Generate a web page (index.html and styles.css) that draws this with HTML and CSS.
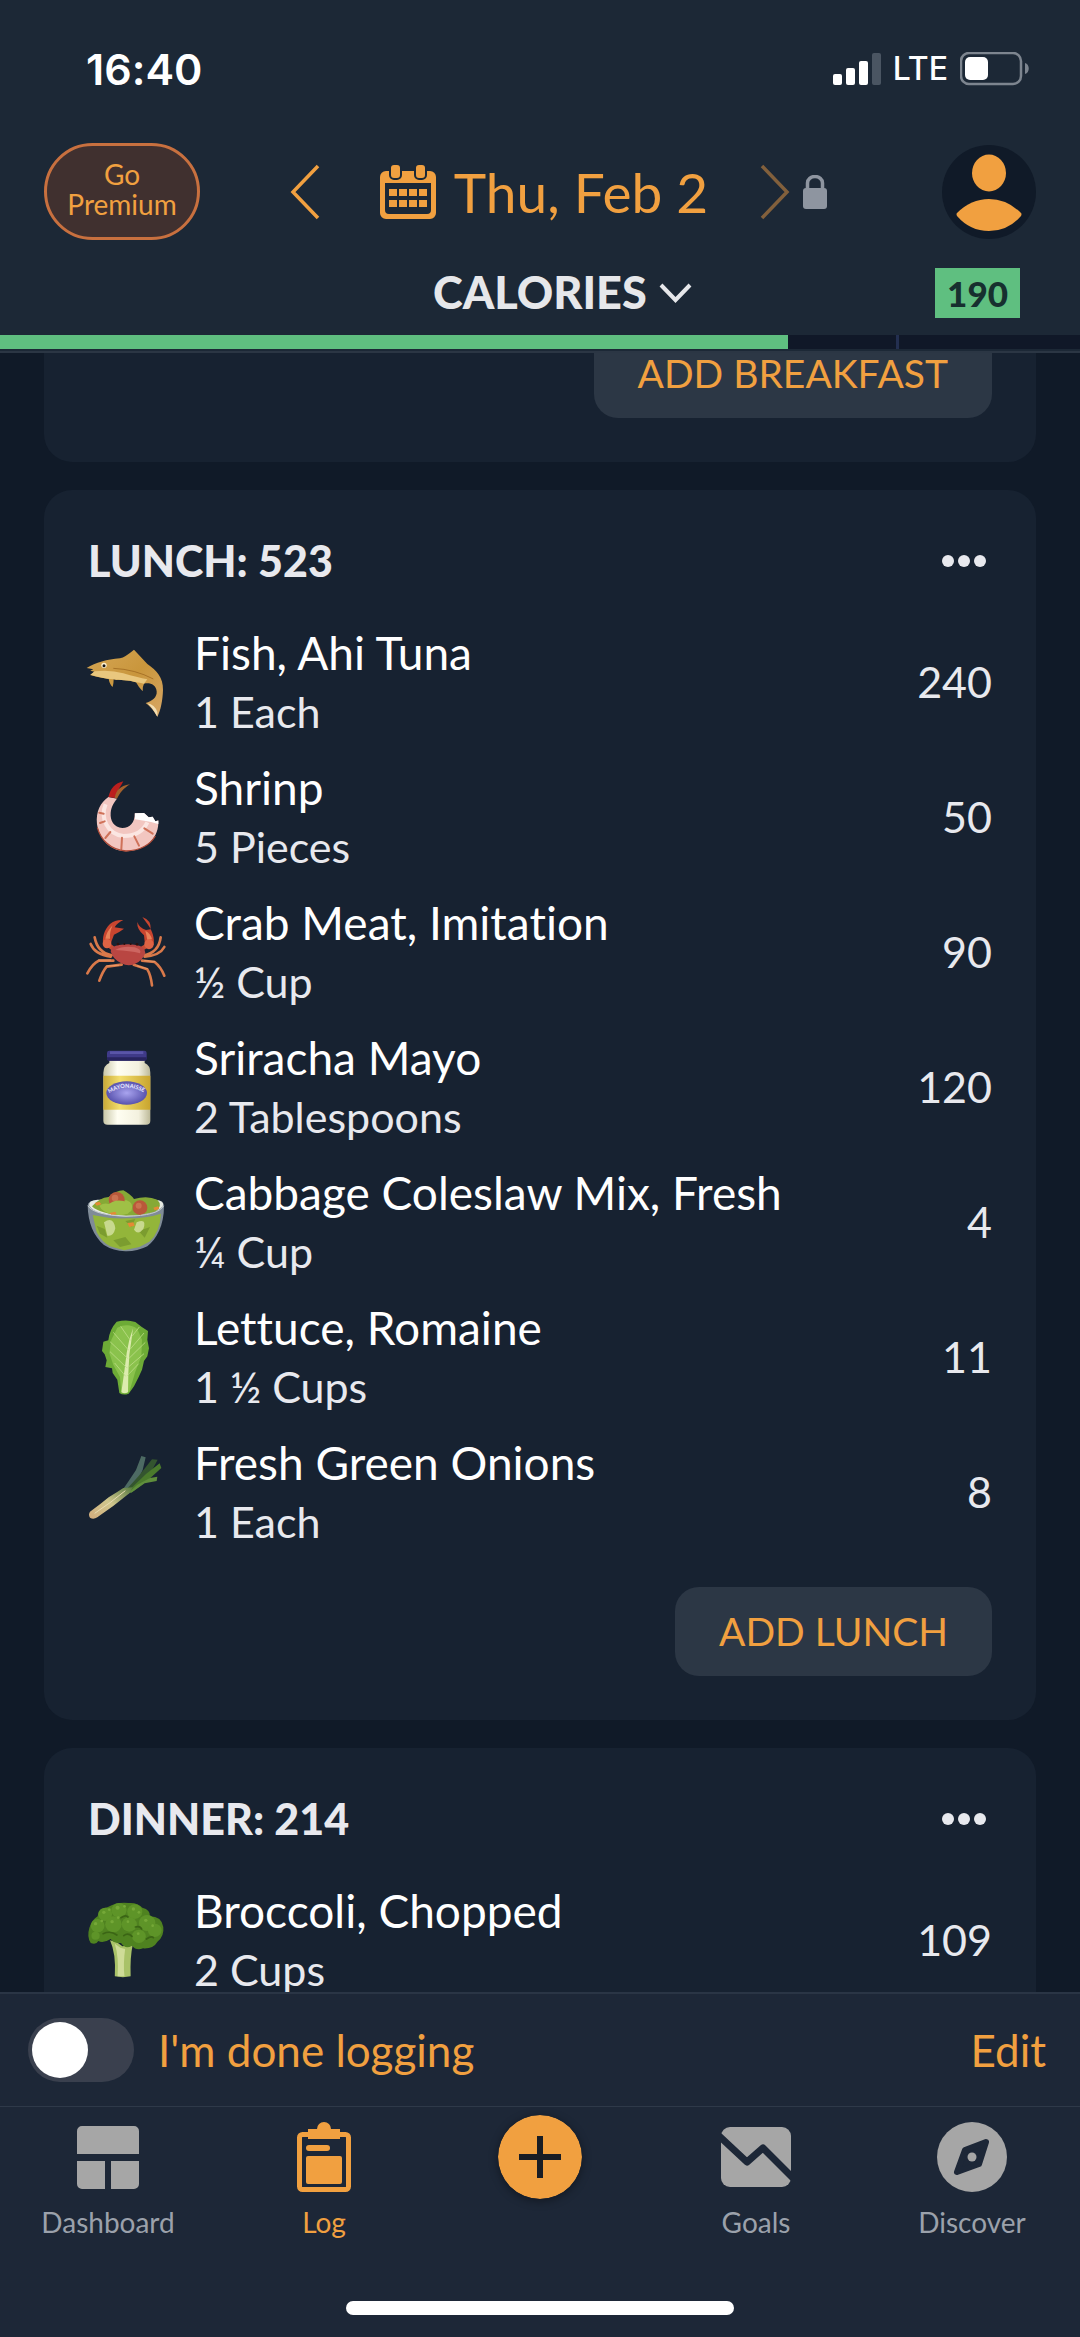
FILE: index.html
```
<!DOCTYPE html>
<html lang="en">
<head>
    <meta charset="utf-8">
    <meta name="viewport" content="width=device-width, initial-scale=1">
    <title>Food Log</title>
    <link rel="stylesheet" href="styles.css">
</head>
<body>
    <header class="header">
        <div class="status-bar">
            <span class="time">16:40</span>
            <div class="status-icons">
                <svg width="48" height="33" viewBox="0 0 48 33">
                    <g fill="#fff">
                        <rect x="0" y="21" width="9" height="11" rx="2"/>
                        <rect x="13" y="15" width="9" height="17" rx="2"/>
                        <rect x="26" y="8" width="9" height="24" rx="2"/>
                    </g>
                    <rect x="39" y="0" width="9" height="32" rx="2" fill="#4a5562"/>
                </svg>
                <span class="network">LTE</span>
                <svg width="70" height="34" viewBox="0 0 70 34">
                    <rect x="1" y="1" width="60" height="31" rx="8" fill="none" stroke="#7d858f" stroke-width="2.5"/>
                    <rect x="5" y="5" width="23" height="23" rx="5" fill="#fff"/>
                    <path d="M65 11c5 1 5 10 0 11z" fill="#7d858f"/>
                </svg>
            </div>
        </div>

        <div class="top-row">
            <button class="premium">Go<br>Premium</button>
            <div class="date-nav">
                <button class="icon-button" aria-label="Previous day">
                    <svg width="30" height="56" viewBox="0 0 30 56"><path d="M28 2L3 28l25 26" fill="none" stroke="#f1a040" stroke-width="3.5"/></svg>
                </button>
                <button class="date">
                    <svg width="56" height="54" viewBox="0 0 56 54">
                        <path fill="#f1a040" fill-rule="evenodd" d="M6 6h44a6 6 0 0 1 6 6v36a6 6 0 0 1-6 6H6a6 6 0 0 1-6-6V12a6 6 0 0 1 6-6zM5 18v27a4 4 0 0 0 4 4h38a4 4 0 0 0 4-4V18z"/>
                        <g fill="#f1a040" stroke="#1c2836" stroke-width="2">
                            <rect x="10" y="-1" width="11" height="15" rx="4"/>
                            <rect x="35" y="-1" width="11" height="15" rx="4"/>
                        </g>
                        <path fill="#f1a040" d="M9 24h8v7H9zM19 24h8v7h-8zM29 24h8v7h-8zM39 24h8v7h-8zM9 35h8v7H9zM19 35h8v7h-8zM29 35h8v7h-8zM39 35h8v7h-8z"/>
                    </svg>
                    Thu, Feb 2
                </button>
                <button class="icon-button" aria-label="Next day">
                    <svg width="30" height="56" viewBox="0 0 30 56"><path d="M2 2l25 26L2 54" fill="none" stroke="#82603c" stroke-width="3.5"/></svg>
                </button>
            </div>
            <div class="top-right">
                <svg class="lock" width="24" height="34" viewBox="0 0 24 34">
                    <path d="M4.500 15V8a7.500 6.500 0 0 1 15 0v7" fill="none" stroke="#8e95a0" stroke-width="3.500"/>
                    <rect y="13" width="24" height="21" rx="3" fill="#8e95a0"/>
                </svg>
                <button class="icon-button" aria-label="Profile">
                    <svg width="94" height="94" viewBox="0 0 94 94">
                        <circle cx="47" cy="47" r="47" fill="#101a28"/>
                        <ellipse cx="47" cy="28" rx="17" ry="18.500" fill="#f1a040"/>
                        <path d="M15 68q14-14 32-14t32 14q1 1 0 3Q66 86 47 86T15 71q-1-2 0-3z" fill="#f1a040"/>
                    </svg>
                </button>
            </div>
        </div>

        <div class="nutrient-row">
            <select class="nutrient" aria-label="Nutrient">
                <option>CALORIES</option>
            </select>
            <div class="nutrient-right">
                <svg width="33" height="22" viewBox="0 0 33 22"><path d="M2 3l14.500 15L31 3" fill="none" stroke="#e6e7ea" stroke-width="4"/></svg>
                <span class="badge">190</span>
            </div>
        </div>

        <div class="progress">
            <div class="progress-fill" style="width: 73%"></div>
            <div class="progress-mark"></div>
        </div>
    </header>

    <main class="log">
        <div class="meals">
            <section class="card">
                <button class="add">ADD BREAKFAST</button>
            </section>

            <section class="card">
                <div class="card-head">
                    <h2>LUNCH: 523</h2>
                    <button class="icon-button more" aria-label="Lunch options">
                        <svg width="44" height="12" viewBox="0 0 44 12" fill="#e8e9ee"><circle cx="6" cy="6" r="6"/><circle cx="22" cy="6" r="6"/><circle cx="38" cy="6" r="6"/></svg>
                    </button>
                </div>
                <ul class="foods">
                    <li class="food">
                        <svg class="food-icon" viewBox="84 80 228 228">
                            <defs>
                                <linearGradient id="fish" x1="0" y1="0" x2="1" y2="1">
                                    <stop offset="0" stop-color="#d5a655"/><stop offset=".5" stop-color="#c9963c"/><stop offset="1" stop-color="#d8a766"/>
                                </linearGradient>
                            </defs>
                            <path fill="url(#fish)" d="M80 152C108 136 140 126 180 123Q196 119 222 97Q240 116 262 140C290 160 310 180 309 218C308 250 302 280 292 298Q276 270 257 257C276 252 292 240 290 222C288 202 270 195 252 199Q247 208 248 222Q236 210 228 195C204 187 180 190 161 186Q161 198 158 209Q148 200 146 184Q110 180 90 173L103 163L91 160L100 156z"/>
                            <path fill="#e9c77e" d="M104 162Q150 156 190 168Q232 180 262 186L252 199Q238 196 228 195C204 187 180 190 161 186Q120 182 92 172z"/>
                            <path fill="#f3dfb4" d="M262 258Q284 262 292 284L292 298Q276 270 262 258z"/>
                            <path fill="none" stroke="#a87327" stroke-width="3" d="M160 153Q225 156 280 185"/>
                            <circle cx="132" cy="144" r="8" fill="#fff3d4"/><circle cx="132" cy="145" r="4.500" fill="#141414"/>
                        </svg>
                        <div class="food-text"><span class="food-name">Fish, Ahi Tuna</span><span class="food-amount">1 Each</span></div>
                        <span class="food-calories">240</span>
                    </li>
                    <li class="food">
                        <svg class="food-icon" viewBox="84 484 228 228">
                            <path fill="#f2c6c0" d="M145 538C122 555 107 580 111 620C118 665 150 700 198 701C260 699 298 660 295 608L286 611L278 597L266 599L252 586L224 587C225 615 210 631 187 631C162 628 150 610 152 585C154 565 163 553 171 543z"/>
                            <path fill="none" stroke="#fbe6e2" stroke-width="12" d="M137 560C120 600 142 650 190 655C225 655 250 640 262 614"/>
                            <path fill="#fff" d="M225 587l27-1 14 13 12-2 8 14 9-2v10l-22-6-20-4-28-4z"/>
                            <g stroke="#cf7259" stroke-width="6" stroke-linecap="round">
                                <path d="M118 585l13 3M120 616l14-5M136 661l15-18M184 694l2-34M237 684l-14-28M278 648l-25-16"/>
                            </g>
                            <path fill="none" stroke="#b04c38" stroke-width="4" d="M112 630C122 665 150 697 198 700C240 698 270 682 286 655"/>
                            <path fill="#bb1f1d" d="M145 538C153 510 164 498 190 491L184 502C174 515 170 530 164 541z"/>
                            <path fill="#a4622c" d="M164 540C168 520 178 505 210 500C190 512 180 526 171 543z"/>
                        </svg>
                        <div class="food-text"><span class="food-name">Shrinp</span><span class="food-amount">5 Pieces</span></div>
                        <span class="food-calories">50</span>
                    </li>
                    <li class="food">
                        <svg class="food-icon" viewBox="84 888 228 228">
                            <g fill="none" stroke="#d9794a" stroke-width="8" stroke-linecap="round" stroke-linejoin="round">
                                <path d="M155 1012Q112 1004 104 958M152 1016Q105 1010 92 978M160 1028L116 1028Q98 1036 82 1066M185 1040L140 1046Q128 1060 118 1088"/>
                                <path d="M251 1012Q296 1004 302 958M254 1016Q300 1012 313 987M246 1028L284 1032Q302 1046 313 1073M221 1040L262 1054Q272 1070 276 1102"/>
                            </g>
                            <g fill="none" stroke="#f3ab74" stroke-width="2" stroke-linecap="round">
                                <path d="M116 1026L152 1026M140 1044L176 1042M284 1030L254 1028M262 1052L232 1044"/>
                            </g>
                            <path fill="none" stroke="#c84c34" stroke-width="13" stroke-linecap="round" d="M160 992L142 978M246 992L266 980"/>
                            <path fill="#c9452f" d="M130 980C126 960 132 935 150 918Q166 904 190 906Q172 914 164 928L192 932Q176 944 162 950Q154 968 150 988z"/>
                            <path fill="#c9452f" d="M281 980C284 960 278 940 264 920L247 897Q274 906 272 934L258 936Q238 930 232 912Q230 934 252 952L256 990z"/>
                            <path fill="#e98259" d="M136 962Q140 940 158 922Q148 944 150 962zM276 964Q272 946 256 938Q260 954 262 966z"/>
                            <ellipse cx="141" cy="977" rx="13" ry="14" fill="#dd6344"/><ellipse cx="267" cy="979" rx="14" ry="15" fill="#dd6344"/>
                            <path fill="#b94642" d="M152 1000Q154 984 178 981Q204 976 229 981Q254 986 256 1004Q250 1026 224 1038Q204 1046 184 1036Q158 1024 152 1000z"/>
                            <path fill="#cd6661" d="M166 996Q190 982 224 988Q246 994 240 1006Q210 998 166 996z"/>
                            <circle cx="174" cy="978" r="4" fill="#2b1210"/><circle cx="193" cy="978" r="3" fill="#2b1210"/><circle cx="212" cy="978" r="3" fill="#2b1210"/><circle cx="231" cy="979" r="4" fill="#2b1210"/>
                        </svg>
                        <div class="food-text"><span class="food-name">Crab Meat, Imitation</span><span class="food-amount">½ Cup</span></div>
                        <span class="food-calories">90</span>
                    </li>
                    <li class="food">
                        <svg class="food-icon" viewBox="84 91 228 228">
                            <defs>
                                <linearGradient id="jar"><stop offset="0" stop-color="#c9c7a8"/><stop offset=".3" stop-color="#fffef2"/><stop offset=".75" stop-color="#f3f1df"/><stop offset="1" stop-color="#bcb998"/></linearGradient>
                                <linearGradient id="band"><stop offset="0" stop-color="#c9aa38"/><stop offset=".35" stop-color="#f3de6d"/><stop offset="1" stop-color="#c9a52e"/></linearGradient>
                                <radialGradient id="oval"><stop offset="0" stop-color="#a9a4ef"/><stop offset="1" stop-color="#5953ae"/></radialGradient>
                                <path id="arc" d="M148 224Q200 190 256 224"/>
                            </defs>
                            <path fill="url(#jar)" d="M148 120H254V133Q271 140 271 162V306Q271 318 258 318H143Q130 318 130 306V162Q131 140 148 133z"/>
                            <path fill="url(#band)" d="M130 171H271V273H130z"/>
                            <ellipse cx="200" cy="223" rx="61" ry="35" fill="url(#oval)"/>
                            <text class="jar-label"><textPath href="#arc">MAYONAISSE</textPath></text>
                            <rect x="141" y="96" width="119" height="30" rx="7" fill="#3f3a88"/>
                            <path fill="#5a55a8" d="M150 98H250V106H150z"/>
                            <path fill="#28245e" d="M141 116H260V120Q260 126 253 126H148Q141 126 141 120z"/>
                        </svg>
                        <div class="food-text"><span class="food-name">Sriracha Mayo</span><span class="food-amount">2 Tablespoons</span></div>
                        <span class="food-calories">120</span>
                    </li>
                    <li class="food">
                        <svg class="food-icon" viewBox="84 495 228 228">
                            <path fill="#7f8b97" d="M83 560Q84 545 110 544H285Q312 545 312 562C312 620 290 660 262 682Q230 698 196 697Q160 696 132 678C100 650 84 610 83 560z"/>
                            <path fill="#e7ebe4" d="M88 560Q84 544 112 542H285Q316 544 308 562Q290 586 198 592Q104 588 88 560z"/>
                            <path fill="#86a936" d="M96 562Q118 536 146 534Q168 514 190 514Q212 526 222 540Q262 528 292 542Q310 560 286 578Q240 590 198 590Q120 586 96 562z"/>
                            <path fill="#93b53a" d="M98 588Q150 600 200 598Q260 598 303 584Q300 640 268 668L238 684L192 694L150 682Q126 670 110 640z"/>
                            <path fill="#9fc046" d="M118 560Q140 546 158 562Q172 540 200 544Q224 552 214 576Q190 592 160 586Q126 580 118 560z"/>
                            <path fill="#7b9c2f" d="M110 620l24 10 8 26-22-12zM196 606l30-6-12 24zM236 636l34-12-16 32zM160 664l36-10 18 22-34 8z"/>
                            <path fill="#d6e2a4" d="M132 610Q160 590 166 628Q160 654 142 650zM230 610Q262 596 250 630Q234 650 222 632z" opacity=".8"/>
                            <circle cx="170" cy="543" r="24" fill="#b9583a"/><circle cx="240" cy="566" r="22" fill="#b9583a"/>
                            <circle cx="165" cy="537" r="10" fill="#cb7250"/><circle cx="236" cy="560" r="9" fill="#cb7250"/>
                            <path fill="#9fc046" d="M140 560Q170 534 204 552Q216 566 204 584Q170 592 146 580z"/>
                            <path fill="#e48a35" d="M104 552l14-4 6 8-14 4zM148 582l18-4 4 8-16 2zM280 566l14-4 4 8-14 4zM202 612l18-2 4 10-16 4z"/>
                            <path fill="none" stroke="#c7cdd0" stroke-width="3" d="M84 560Q100 588 198 592Q296 590 311 560"/>
                        </svg>
                        <div class="food-text"><span class="food-name">Cabbage Coleslaw Mix, Fresh</span><span class="food-amount">¼ Cup</span></div>
                        <span class="food-calories">4</span>
                    </li>
                    <li class="food">
                        <svg class="food-icon" viewBox="84 88 228 228">
                            <path fill="#6dab36" d="M178 310L172 270L158 250L156 236L136 232L140 212L134 194L126 184L130 156L145 152Q148 120 170 96Q200 88 226 97Q244 112 264 124L262 150L267 176L262 200L252 214L246 240L236 262L222 290L206 312Q190 318 178 310z"/>
                            <path fill="#8ac24c" d="M184 306L180 262L160 226L148 190L154 150L172 114Q206 98 232 118L246 150L244 200L226 246L208 306z"/>
                            <path fill="#dcebae" d="M184 308Q194 240 200 190Q206 150 219 116Q214 156 208 196Q204 250 204 308Q194 314 184 308z"/>
                            <g fill="none" stroke="#bcdc86" stroke-width="2.500">
                                <path d="M197 260L164 220M200 234L150 186M203 206L150 156M206 182L160 128M211 152L182 110M202 258L236 222M203 234L252 192M207 206L256 158M211 178L252 130M216 140L238 112"/>
                            </g>
                        </svg>
                        <div class="food-text"><span class="food-name">Lettuce, Romaine</span><span class="food-amount">1 ½ Cups</span></div>
                        <span class="food-calories">11</span>
                    </li>
                    <li class="food">
                        <svg class="food-icon" viewBox="84 492 228 228">
                            <defs>
                                <linearGradient id="leek" x1="0" y1="1" x2="1" y2="0"><stop offset="0" stop-color="#d3ad7d"/><stop offset=".5" stop-color="#cfc68d"/><stop offset="1" stop-color="#55793f"/></linearGradient>
                            </defs>
                            <path fill="#4d6a63" d="M186 602L204 576L228 540L244 498L257 502L248 540L222 596L205 612z"/>
                            <path fill="#34552f" d="M198 600L236 558L276 508L293 509L270 552L222 602z"/>
                            <path fill="#4a7a2c" d="M206 602L258 552L299 520L304 534L262 572L216 606z"/>
                            <path fill="#5f8e3c" d="M206 608L232 584L270 564L292 560L290 573L254 580L214 608z"/>
                            <path fill="url(#leek)" d="M90 665Q120 644 146 622Q172 606 190 594L218 592L208 610Q160 650 112 682Q100 690 90 683Q84 674 90 665z"/>
                            <path fill="none" stroke="#e9ddb2" stroke-width="3" d="M104 670Q150 640 196 602"/>
                        </svg>
                        <div class="food-text"><span class="food-name">Fresh Green Onions</span><span class="food-amount">1 Each</span></div>
                        <span class="food-calories">8</span>
                    </li>
                </ul>
                <button class="add">ADD LUNCH</button>
            </section>

            <section class="card">
                <div class="card-head">
                    <h2>DINNER: 214</h2>
                    <button class="icon-button more" aria-label="Dinner options">
                        <svg width="44" height="12" viewBox="0 0 44 12" fill="#e8e9ee"><circle cx="6" cy="6" r="6"/><circle cx="22" cy="6" r="6"/><circle cx="38" cy="6" r="6"/></svg>
                    </button>
                </div>
                <ul class="foods">
                    <li class="food">
                        <svg class="food-icon" viewBox="256 75 221 228" preserveAspectRatio="none">
                            <path fill="#a9c268" d="M320 190L340 196L356 208L386 204Q378 240 380 298Q358 303 334 298Q338 230 320 190z"/>
                            <path fill="#cfdc98" d="M334 200L350 212L364 216Q358 260 362 298L342 298Q346 240 334 200z"/>
                            <path fill="#4f8220" d="M264 198Q252 180 260 152Q268 128 284 118Q286 96 314 90Q340 74 374 78Q400 76 414 92Q438 98 436 118Q470 118 475 150Q478 178 458 194Q446 216 416 214Q396 222 384 206Q364 218 352 198Q330 200 322 186Q300 200 286 192Q280 204 264 198z"/>
                            <g fill="#5e9428"><circle cx="306" cy="112" r="20"/><circle cx="346" cy="100" r="22"/><circle cx="392" cy="104" r="22"/><circle cx="284" cy="146" r="20"/><circle cx="330" cy="142" r="24"/><circle cx="428" cy="138" r="24"/><circle cx="450" cy="160" r="20"/><circle cx="376" cy="142" r="22"/><circle cx="404" cy="178" r="20"/><circle cx="278" cy="176" r="12"/></g>
                            <g fill="#75a838"><circle cx="302" cy="106" r="5"/><circle cx="318" cy="98" r="4"/><circle cx="342" cy="92" r="6"/><circle cx="362" cy="88" r="4"/><circle cx="388" cy="96" r="5"/><circle cx="404" cy="106" r="4"/><circle cx="326" cy="134" r="5"/><circle cx="344" cy="122" r="4"/><circle cx="424" cy="130" r="5"/><circle cx="444" cy="146" r="4"/><circle cx="278" cy="140" r="5"/><circle cx="296" cy="132" r="4"/><circle cx="372" cy="134" r="4"/><circle cx="402" cy="170" r="4"/></g>
                            <path fill="none" stroke="#3b6515" stroke-width="5" stroke-linecap="round" d="M300 170Q322 160 340 174M352 122Q366 112 372 120M394 150Q408 146 412 156M426 186Q440 176 446 182M360 176Q372 166 384 178"/>
                        </svg>
                        <div class="food-text"><span class="food-name">Broccoli, Chopped</span><span class="food-amount">2 Cups</span></div>
                        <span class="food-calories">109</span>
                    </li>
                </ul>
            </section>
        </div>
    </main>

    <footer class="footer">
        <div class="done-row">
            <input class="toggle" type="checkbox" id="done">
            <label for="done">I'm done logging</label>
            <button class="edit">Edit</button>
        </div>
        <nav class="tabs">
            <a class="tab" href="#">
                <span class="tab-icon"><svg width="62" height="63" viewBox="0 0 62 63" fill="#a6a6a6"><path d="M5 0h52a5 5 0 0 1 5 5v23H0V5a5 5 0 0 1 5-5zM0 35h28v28H5a5 5 0 0 1-5-5zM34 35h28v23a5 5 0 0 1-5 5H34z"/></svg></span>
                Dashboard
            </a>
            <a class="tab active" href="#">
                <span class="tab-icon"><svg width="54" height="70" viewBox="0 0 54 70">
                    <rect x="2.500" y="12.500" width="49" height="55" rx="3" fill="none" stroke="#f1a040" stroke-width="5"/>
                    <path d="M11 7h9a7 7 0 0 1 14 0h9v10H11z" fill="#f1a040"/>
                    <rect x="9" y="23" width="24" height="6" rx="3" fill="#f1a040"/>
                    <rect x="9" y="34" width="36" height="28" rx="2" fill="#f1a040"/>
                </svg></span>
                Log
            </a>
            <a class="tab" href="#" aria-label="Add">
                <span class="tab-icon"><svg class="plus" width="84" height="84" viewBox="0 0 84 84"><circle cx="42" cy="42" r="42" fill="#f1a040"/><path d="M42 21v42M21 42h42" stroke="#1a1d24" stroke-width="6"/></svg></span>
            </a>
            <a class="tab" href="#">
                <span class="tab-icon"><svg width="70" height="60" viewBox="0 0 70 60"><rect width="70" height="60" rx="9" fill="#a6a6a6"/><path d="M-4 7l30 28 16-14 32 32" fill="none" stroke="#1d2737" stroke-width="7" stroke-linejoin="round"/></svg></span>
                Goals
            </a>
            <a class="tab" href="#">
                <span class="tab-icon"><svg width="70" height="70" viewBox="0 0 70 70"><circle cx="35" cy="35" r="35" fill="#a6a6a6"/><path d="M49 20L28 28l-8 22 22-8z" fill="#1d2737" stroke="#1d2737" stroke-width="6" stroke-linejoin="round"/><circle cx="35" cy="35" r="4.500" fill="#a6a6a6"/></svg></span>
                Discover
            </a>
        </nav>
        <div class="home-indicator"></div>
    </footer>
</body>
</html>
```
FILE: styles.css
```
* {
    box-sizing: border-box;
}

body {
    margin: 0;
    height: 100vh;
    display: flex;
    flex-direction: column;
    background-color: #101a28;
    color: #e8e9ee;
    font-family: Lato, "Noto Sans", sans-serif;
    font-size: 44px;
    font-variant-ligatures: none;
}

button,
select {
    margin: 0;
    padding: 0;
    border: none;
    background: none;
    color: inherit;
    font: inherit;
    cursor: pointer;
}

svg {
    display: block;
    flex: none;
}

.icon-button {
    display: block;
}

/* Header */
.header {
    background-color: #1c2836;
    padding-bottom: 2px;
    border-bottom: 2px solid #2b3644;
}

.status-bar {
    display: flex;
    align-items: center;
    justify-content: space-between;
    height: 138px;
    padding: 0 50px 0 86px;
    color: #fff;
    font-family: Inter, sans-serif;
}

.time {
    font-size: 43px;
    font-weight: 600;
}

.status-icons {
    display: flex;
    align-items: center;
    gap: 12px;
}

.network {
    font-size: 32px;
    font-weight: 500;
    line-height: 40px;
}

.top-row {
    display: grid;
    grid-template-columns: 1fr auto 1fr;
    align-items: center;
    padding: 5px 44px 0;
}

.premium {
    justify-self: start;
    width: 156px;
    height: 97px;
    padding-bottom: 6px;
    border: 3px solid #c8703f;
    border-radius: 49px;
    background-color: #40302f;
    color: #f1a040;
    font-size: 28px;
    line-height: 30px;
}

.date-nav {
    display: flex;
    align-items: center;
    justify-content: space-between;
    width: 500px;
}

.date {
    display: flex;
    align-items: center;
    gap: 18px;
    padding-left: 8px;
    color: #f1a040;
    font-size: 55px;
    line-height: 64px;
}

.top-right {
    display: flex;
    align-items: center;
    justify-content: space-between;
    padding-left: 13px;
}

.nutrient-row {
    display: grid;
    grid-template-columns: 1fr auto 1fr;
    align-items: center;
    padding: 28px 60px 17px;
}

.nutrient {
    grid-column: 2;
    appearance: none;
    height: 50px;
    padding-bottom: 2px;
    color: #e6e7ea;
    font-size: 45px;
    font-weight: 900;
    line-height: 48px;
}

.nutrient-right {
    display: flex;
    align-items: center;
    justify-content: space-between;
    padding-left: 12px;
}

.badge {
    padding: 0 12px;
    background-color: #5fbf80;
    color: #17302f;
    font-size: 35px;
    font-weight: 900;
    line-height: 50px;
}

.progress {
    position: relative;
    height: 14px;
    background-color: #101828;
}

.progress-fill {
    height: 100%;
    background-color: #5fbf80;
}

.progress-mark {
    position: absolute;
    top: 0;
    left: 83%;
    width: 3px;
    height: 100%;
    background-color: #232f50;
}

/* Meals */
.log {
    flex: 1;
    min-height: 0;
    overflow: hidden;
}

.meals {
    display: flex;
    flex-direction: column;
    gap: 28px;
    margin-top: -68px; /* list is scrolled under the header */
    padding: 0 44px;
}

.card {
    display: flex;
    flex-direction: column;
    padding: 44px;
    border-radius: 28px;
    background-color: #172231;
}

.card-head {
    display: flex;
    align-items: center;
    justify-content: space-between;
    margin-bottom: 26px;
}

.card-head h2 {
    margin: 0;
    font-size: 43px;
    font-weight: 900;
    line-height: 54px;
}

.more {
    padding: 0 6px;
}

.foods {
    margin: 0;
    padding: 0;
    list-style: none;
}

.food {
    display: flex;
    align-items: center;
    gap: 30px;
    height: 135px;
}

.food-icon {
    width: 76px;
    height: 76px;
    overflow: visible;
}

.food-text {
    display: flex;
    flex: 1;
    flex-direction: column;
}

.food-name {
    color: #fff;
    font-size: 46px;
    line-height: 60px;
}

.food-amount {
    font-size: 43px;
    line-height: 58px;
}

.food-calories {
    font-size: 43px;
}

.jar-label {
    fill: #e9e8ff;
    font-size: 17px;
    font-weight: 700;
}

.add {
    align-self: flex-end;
    height: 89px;
    padding: 0 44px 2px;
    border-radius: 24px;
    background-color: #2c3745;
    color: #f1a040;
    font-size: 39px;
}

.foods + .add {
    margin-top: 28px;
}

/* Footer */
.footer {
    background-color: #1d2737;
    border-top: 2px solid #2a3545;
}

.done-row {
    display: flex;
    align-items: center;
    gap: 24px;
    height: 112px;
    padding: 0 34px 0 28px;
    color: #f1a040;
    font-size: 44px;
}

.toggle {
    appearance: none;
    width: 106px;
    height: 64px;
    margin: 0;
    padding: 4px;
    border-radius: 32px;
    background-color: #3a404e;
    cursor: pointer;
}

.toggle::before {
    content: "";
    display: block;
    width: 56px;
    height: 56px;
    border-radius: 50%;
    background-color: #fff;
}

.toggle:checked {
    background-color: #5fbf80;
}

.toggle:checked::before {
    margin-left: auto;
}

.edit {
    margin-left: auto;
}

.tabs {
    display: grid;
    grid-template-columns: repeat(5, 1fr);
    padding-top: 10px;
    border-top: 1px solid #2e3949;
}

.tab {
    display: flex;
    flex-direction: column;
    align-items: center;
    gap: 5px;
    color: #9ba1ab;
    font-size: 28px;
    line-height: 40px;
    text-decoration: none;
}

.tab.active {
    color: #f1a040;
}

.tab-icon {
    display: flex;
    align-items: center;
    justify-content: center;
    height: 80px;
}

.plus {
    border-radius: 50%;
    box-shadow: 0 2px 10px rgba(0, 0, 0, 0.4);
}

.home-indicator {
    width: 36%;
    height: 14px;
    margin: 59px auto 22px;
    border-radius: 7px;
    background-color: #fff;
}
```
